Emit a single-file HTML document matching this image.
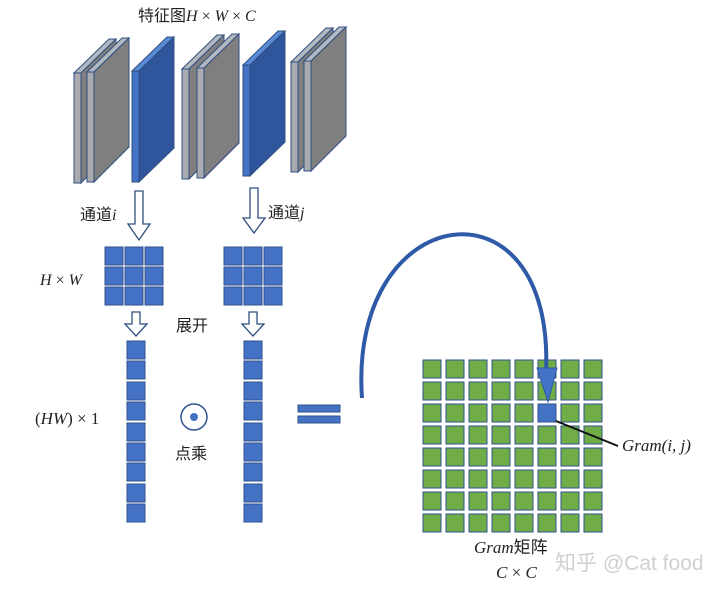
<!DOCTYPE html>
<html><head><meta charset="utf-8"><style>
body{margin:0;background:#fff;width:720px;height:590px;overflow:hidden}
svg{display:block}
text{font-family:"Liberation Serif","Noto Serif CJK SC",serif;fill:#222}
.cj{font-family:"Liberation Sans","Noto Sans CJK SC",sans-serif}
</style></head><body>
<svg width="720" height="590" viewBox="0 0 720 590" xmlns="http://www.w3.org/2000/svg">
<defs>
<g id="gs">
<polygon points="0,0 35,-34 42,-34 7,0" fill="#b4b8c0" stroke="#2f4f80" stroke-width="1"/>
<polygon points="7,0 42,-34 42,75 7,110" fill="#7f7f7f" stroke="#2f4f80" stroke-width="1"/>
<rect x="0" y="0" width="7" height="110" fill="#a9abb0" stroke="#2f4f80" stroke-width="1"/>
</g>
<g id="bs">
<polygon points="0,0 35,-34 42,-34 7,0" fill="#5b8ad6" stroke="#2f4f80" stroke-width="1"/>
<polygon points="7,0 42,-34 42,77 7,111" fill="#2f569c" stroke="#2f4f80" stroke-width="1"/>
<rect x="0" y="0" width="7" height="111" fill="#4472c4" stroke="#2f4f80" stroke-width="1"/>
</g>
<rect id="bc" width="18" height="18" fill="#4472c4" stroke="#2f528f" stroke-width="1"/>
<rect id="gc" width="18" height="18" fill="#70ad47" stroke="#2f528f" stroke-width="1"/>
</defs>
<text x="138" y="21" font-size="16"><tspan class="cj">特征图</tspan><tspan font-style="italic">H</tspan> × <tspan font-style="italic">W</tspan> × <tspan font-style="italic">C</tspan></text>
<use href="#gs" x="74" y="73"/>
<use href="#gs" x="87" y="72"/>
<use href="#bs" x="132" y="71"/>
<use href="#gs" x="182" y="69"/>
<use href="#gs" x="197" y="68"/>
<use href="#bs" x="243" y="65"/>
<use href="#gs" x="291" y="62"/>
<use href="#gs" x="304" y="61"/>
<path d="M135,191 h8 v33 h7 l-11,16 l-11,-16 h7 z" fill="#fff" stroke="#2f4f80" stroke-width="1.3"/>
<path d="M250,188 h8 v30 h7 l-11,15 l-11,-15 h7 z" fill="#fff" stroke="#2f4f80" stroke-width="1.3"/>
<path d="M132,312 h8 v12 h7 l-11,12 l-11,-12 h7 z" fill="#fff" stroke="#2f4f80" stroke-width="1.3"/>
<path d="M249,312 h8 v12 h7 l-11,12 l-11,-12 h7 z" fill="#fff" stroke="#2f4f80" stroke-width="1.3"/>
<text x="80" y="220" font-size="16"><tspan class="cj">通道</tspan><tspan font-style="italic">i</tspan></text>
<text x="268" y="218" font-size="16"><tspan class="cj">通道</tspan><tspan font-style="italic">j</tspan></text>
<text x="40" y="285" font-size="16"><tspan font-style="italic">H</tspan> × <tspan font-style="italic">W</tspan></text>
<text x="176" y="331" font-size="16" class="cj">展开</text>
<text x="35" y="424" font-size="17">(<tspan font-style="italic">HW</tspan>) × 1</text>
<text x="175" y="459" font-size="16" class="cj">点乘</text>
<g>
<use href="#bc" x="105" y="247"/><use href="#bc" x="125" y="247"/><use href="#bc" x="145" y="247"/>
<use href="#bc" x="105" y="267"/><use href="#bc" x="125" y="267"/><use href="#bc" x="145" y="267"/>
<use href="#bc" x="105" y="287"/><use href="#bc" x="125" y="287"/><use href="#bc" x="145" y="287"/>
<use href="#bc" x="224" y="247"/><use href="#bc" x="244" y="247"/><use href="#bc" x="264" y="247"/>
<use href="#bc" x="224" y="267"/><use href="#bc" x="244" y="267"/><use href="#bc" x="264" y="267"/>
<use href="#bc" x="224" y="287"/><use href="#bc" x="244" y="287"/><use href="#bc" x="264" y="287"/>
</g>
<g>
<use href="#bc" x="127" y="341"/><use href="#bc" x="127" y="361"/><use href="#bc" x="127" y="382"/><use href="#bc" x="127" y="402"/><use href="#bc" x="127" y="423"/><use href="#bc" x="127" y="443"/><use href="#bc" x="127" y="463"/><use href="#bc" x="127" y="484"/><use href="#bc" x="127" y="504"/>
<use href="#bc" x="244" y="341"/><use href="#bc" x="244" y="361"/><use href="#bc" x="244" y="382"/><use href="#bc" x="244" y="402"/><use href="#bc" x="244" y="423"/><use href="#bc" x="244" y="443"/><use href="#bc" x="244" y="463"/><use href="#bc" x="244" y="484"/><use href="#bc" x="244" y="504"/>
</g>
<circle cx="194" cy="417" r="13" fill="#fff" stroke="#2f528f" stroke-width="1.5"/>
<circle cx="194" cy="417" r="4" fill="#4472c4"/>
<rect x="298" y="405" width="42" height="7" fill="#4472c4" stroke="#2f528f"/>
<rect x="298" y="416" width="42" height="7" fill="#4472c4" stroke="#2f528f"/>
<g>
<use href="#gc" x="423" y="360"/><use href="#gc" x="446" y="360"/><use href="#gc" x="469" y="360"/><use href="#gc" x="492" y="360"/><use href="#gc" x="515" y="360"/><use href="#gc" x="538" y="360"/><use href="#gc" x="561" y="360"/><use href="#gc" x="584" y="360"/>
<use href="#gc" x="423" y="382"/><use href="#gc" x="446" y="382"/><use href="#gc" x="469" y="382"/><use href="#gc" x="492" y="382"/><use href="#gc" x="515" y="382"/><use href="#gc" x="538" y="382"/><use href="#gc" x="561" y="382"/><use href="#gc" x="584" y="382"/>
<use href="#gc" x="423" y="404"/><use href="#gc" x="446" y="404"/><use href="#gc" x="469" y="404"/><use href="#gc" x="492" y="404"/><use href="#gc" x="515" y="404"/><use href="#bc" x="538" y="404"/><use href="#gc" x="561" y="404"/><use href="#gc" x="584" y="404"/>
<use href="#gc" x="423" y="426"/><use href="#gc" x="446" y="426"/><use href="#gc" x="469" y="426"/><use href="#gc" x="492" y="426"/><use href="#gc" x="515" y="426"/><use href="#gc" x="538" y="426"/><use href="#gc" x="561" y="426"/><use href="#gc" x="584" y="426"/>
<use href="#gc" x="423" y="448"/><use href="#gc" x="446" y="448"/><use href="#gc" x="469" y="448"/><use href="#gc" x="492" y="448"/><use href="#gc" x="515" y="448"/><use href="#gc" x="538" y="448"/><use href="#gc" x="561" y="448"/><use href="#gc" x="584" y="448"/>
<use href="#gc" x="423" y="470"/><use href="#gc" x="446" y="470"/><use href="#gc" x="469" y="470"/><use href="#gc" x="492" y="470"/><use href="#gc" x="515" y="470"/><use href="#gc" x="538" y="470"/><use href="#gc" x="561" y="470"/><use href="#gc" x="584" y="470"/>
<use href="#gc" x="423" y="492"/><use href="#gc" x="446" y="492"/><use href="#gc" x="469" y="492"/><use href="#gc" x="492" y="492"/><use href="#gc" x="515" y="492"/><use href="#gc" x="538" y="492"/><use href="#gc" x="561" y="492"/><use href="#gc" x="584" y="492"/>
<use href="#gc" x="423" y="514"/><use href="#gc" x="446" y="514"/><use href="#gc" x="469" y="514"/><use href="#gc" x="492" y="514"/><use href="#gc" x="515" y="514"/><use href="#gc" x="538" y="514"/><use href="#gc" x="561" y="514"/><use href="#gc" x="584" y="514"/>
</g>
<path d="M362,398 C 348,200 555,170 546,372" fill="none" stroke="#2e5aa8" stroke-width="4"/>
<polygon points="537,368 557,368 548,402" fill="#4472c4" stroke="#2e5aa8" stroke-width="1"/>
<line x1="556" y1="421" x2="618" y2="446" stroke="#111" stroke-width="2"/>
<text x="622" y="451" font-size="17" font-style="italic">Gram(i, j)</text>
<text x="474" y="553" font-size="17"><tspan font-style="italic">Gram</tspan><tspan class="cj">矩阵</tspan></text>
<text x="496" y="578" font-size="17" font-style="italic">C <tspan font-style="normal">×</tspan> C</text>
<text x="555" y="570" font-size="21" class="cj" style="fill:#c8c8c8;fill-opacity:0.85">知乎 @Cat food</text>
</svg>
</body></html>
